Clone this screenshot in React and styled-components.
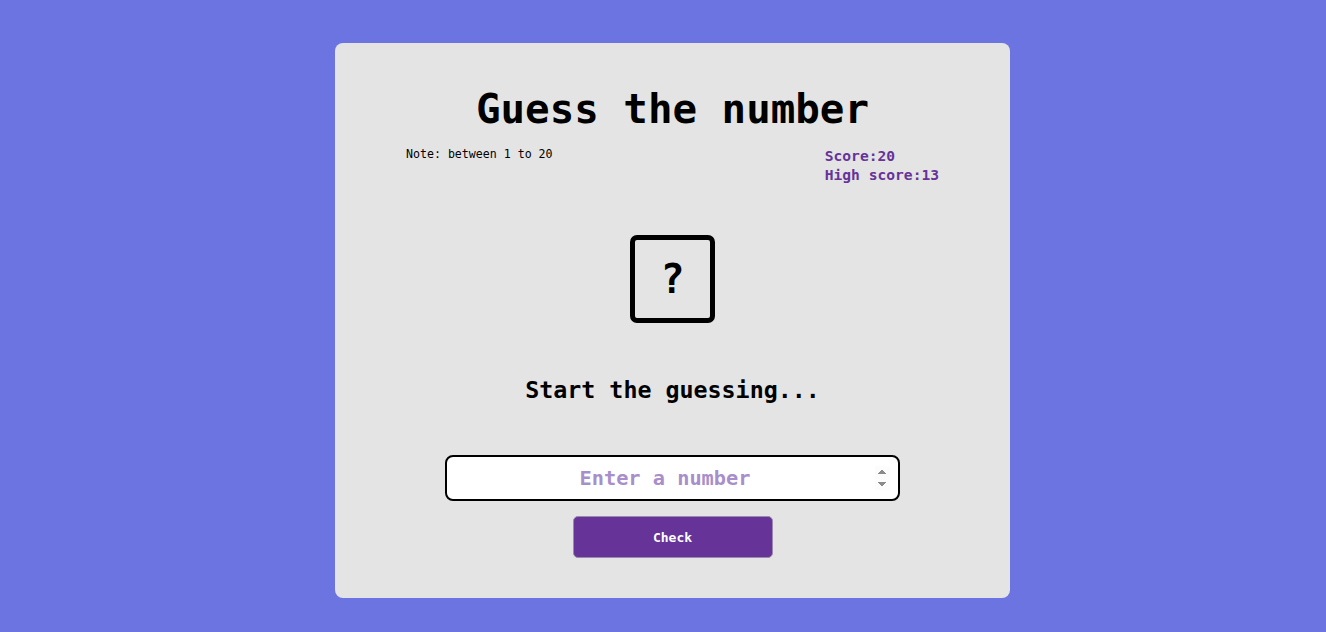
import React, { useState } from 'react';
import styled, { createGlobalStyle } from 'styled-components';

const GlobalStyle = createGlobalStyle`
  html, body {
    margin: 0;
    padding: 0;
    background: #6b74e0;
    font-family: "DejaVu Sans Mono", "Liberation Mono", monospace;
  }
`;

const Page = styled.div`
  min-height: 632px;
  display: flex;
  justify-content: center;
  align-items: flex-start;
  padding: 43px 0 0 19px;
  box-sizing: border-box;
`;

const Card = styled.div`
  width: 675px;
  height: 555px;
  background: #e4e4e4;
  border-radius: 8px;
  display: flex;
  flex-direction: column;
  align-items: center;
  box-sizing: border-box;
  padding-top: 42px;
`;

const Title = styled.h1`
  margin: 0;
  font-size: 40.8px;
  line-height: 48px;
  font-weight: 700;
  color: #000;
`;

const InfoRow = styled.div`
  width: 100%;
  box-sizing: border-box;
  padding: 0 71px;
  margin-top: 9px;
  display: flex;
  justify-content: space-between;
  align-items: flex-start;
`;

const Note = styled.p`
  margin: 4px 0 0;
  font-size: 11.6px;
  line-height: 16px;
`;

const Scores = styled.div`
  margin-top: 4px;
  color: #663399;
  font-size: 14.6px;
  font-weight: 700;
  line-height: 19px;
`;

const Mystery = styled.div`
  margin-top: 51px;
  width: 85px;
  height: 88px;
  box-sizing: border-box;
  border: 5px solid #000;
  border-radius: 7px;
  display: flex;
  align-items: center;
  justify-content: center;
  font-size: 40px;
  font-weight: 700;
`;

const Message = styled.h2`
  margin: 52px 0 0;
  font-size: 23.3px;
  line-height: 30px;
  font-weight: 700;
`;

const NumberInput = styled.input`
  margin-top: 50px;
  width: 455px;
  height: 46px;
  box-sizing: border-box;
  border: 2px solid #000;
  border-radius: 8px;
  background: #fff;
  padding: 0 8px;
  text-align: center;
  font-family: "DejaVu Sans Mono", "Liberation Mono", monospace;
  font-size: 20.3px;
  font-weight: 700;
  outline: none;

  &::placeholder {
    color: #a88fcb;
  }

  &::-webkit-inner-spin-button {
    opacity: 1;
  }
`;

const CheckButton = styled.button`
  margin-top: 15px;
  width: 200px;
  height: 42px;
  background: #663399;
  color: #fff;
  border: 1px solid #9a8aac;
  border-radius: 5px;
  font-family: "DejaVu Sans Mono", "Liberation Mono", monospace;
  font-size: 13px;
  font-weight: 700;
  cursor: pointer;
`;

export default function App() {
  const [value, setValue] = useState('');

  return (
    <>
      <GlobalStyle />
      <Page>
        <Card>
          <Title>Guess the number</Title>
          <InfoRow>
            <Note>Note: between 1 to 20</Note>
            <Scores>
              <div>Score:20</div>
              <div>High score:13</div>
            </Scores>
          </InfoRow>
          <Mystery>?</Mystery>
          <Message>Start the guessing...</Message>
          <NumberInput
            type="number"
            placeholder="Enter a number"
            value={value}
            onChange={(e) => setValue(e.target.value)}
          />
          <CheckButton>Check</CheckButton>
        </Card>
      </Page>
    </>
  );
}
